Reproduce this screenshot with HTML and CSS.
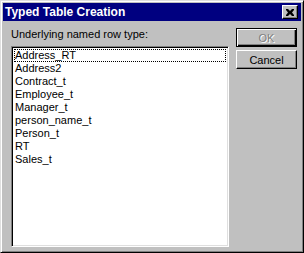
FILE: index.html
```html
<!DOCTYPE html>
<html lang="en">
<head>
  <meta charset="UTF-8">
  <title>Typed Table Creation</title>
  <link rel="stylesheet" href="styles.css">
</head>
<body>
  <div class="dialog">
    <div class="titlebar">
      <span class="title">Typed Table Creation</span>
      <button class="close-btn">
        <svg width="8" height="7" viewBox="0 0 8 7">
          <path d="M0 0h2l2 2 2-2h2v1l-2 2.5 2 2.5v1h-2l-2-2-2 2h-2v-1l2-2.5-2-2.5z" fill="#000"/>
        </svg>
      </button>
    </div>

    <div class="content">
      <div class="left">
        <div class="label">Underlying named row type:</div>
        <div class="listbox">
          <div class="item focused">Address_RT</div>
          <div class="item">Address2</div>
          <div class="item">Contract_t</div>
          <div class="item">Employee_t</div>
          <div class="item">Manager_t</div>
          <div class="item">person_name_t</div>
          <div class="item">Person_t</div>
          <div class="item">RT</div>
          <div class="item">Sales_t</div>
        </div>
      </div>
      <div class="buttons">
        <button class="btn default" disabled>OK</button>
        <button class="btn">Cancel</button>
      </div>
    </div>
  </div>
</body>
</html>
```

FILE: styles.css
```css
body {
  margin: 0;
  background-color: #c0c0c0;
  font-family: "Liberation Sans", Arial, sans-serif;
  font-size: 11px;
  color: #000;
}
.dialog {
  width: 304px;
  height: 253px;
  box-sizing: border-box;
  background-color: #c0c0c0;
  border: 1px solid;
  border-color: #dfdfdf #000 #000 #dfdfdf;
  box-shadow: inset 1px 1px 0 #fff, inset -1px -1px 0 #808080;
  padding: 2px;
  display: flex;
  flex-direction: column;
}
.titlebar {
  height: 18px;
  background-color: #000080;
  color: #fff;
  display: flex;
  align-items: center;
  justify-content: space-between;
  padding: 0 3px 0 2px;
}
.title {
  font-weight: bold;
  font-size: 12px;
}
.close-btn {
  width: 16px;
  height: 14px;
  padding: 0;
  background-color: #c0c0c0;
  border: 1px solid;
  border-color: #fff #000 #000 #fff;
  box-shadow: inset -1px -1px 0 #808080;
  display: flex;
  align-items: center;
  justify-content: center;
}
.content {
  flex: 1;
  display: flex;
  padding: 7px 5px 3px 8px;
}
.left {
  display: flex;
  flex-direction: column;
}
.label {
  height: 18px;
  line-height: 13px;
}
.listbox {
  flex: 1;
  width: 218px;
  box-sizing: border-box;
  background-color: #fff;
  border: 1px solid;
  border-color: #808080 #fff #fff #808080;
  box-shadow: inset 1px 1px 0 #000, inset -1px -1px 0 #dfdfdf;
  padding: 2px;
}
.item {
  height: 13px;
  line-height: 13px;
  padding-left: 1px;
}
.item.focused {
  outline: 1px dotted #000;
  outline-offset: -1px;
}
.buttons {
  margin-left: 7px;
  display: flex;
  flex-direction: column;
  gap: 3px;
}
.btn {
  width: 61px;
  height: 19px;
  padding: 0;
  font-family: "Liberation Sans", Arial, sans-serif;
  font-size: 11px;
  color: #000;
  background-color: #c0c0c0;
  border: 1px solid;
  border-color: #fff #000 #000 #fff;
  box-shadow: inset -1px -1px 0 #808080;
}
.btn.default {
  border: 1px solid #000;
  box-shadow: inset 1px 1px 0 #fff, inset -1px -1px 0 #000, inset -2px -2px 0 #808080;
  color: #808080;
  text-shadow: 1px 1px 0 #fff;
}
```
